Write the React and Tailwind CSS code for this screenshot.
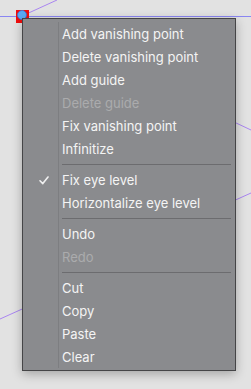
import React from "react";

const items = [
  { label: "Add vanishing point" },
  { label: "Delete vanishing point" },
  { label: "Add guide" },
  { label: "Delete guide", disabled: true },
  { label: "Fix vanishing point" },
  { label: "Infinitize" },
  { sep: true },
  { label: "Fix eye level", checked: true },
  { label: "Horizontalize eye level" },
  { sep: true },
  { label: "Undo" },
  { label: "Redo", disabled: true },
  { sep: true },
  { label: "Cut" },
  { label: "Copy" },
  { label: "Paste" },
  { label: "Clear" },
];

function Check() {
  return (
    <svg width="10" height="9" viewBox="0 0 10 9" className="block">
      <path d="M1 4.8 L3.8 7.6 L9 1" fill="none" stroke="#f0f0f0" strokeWidth="1.6" strokeLinecap="round" strokeLinejoin="round" />
    </svg>
  );
}

export default function App() {
  return (
    <div className="relative w-[251px] h-[389px] overflow-hidden bg-[#e2e2e2]" style={{ fontFamily: "Inter, 'Noto Sans', sans-serif" }}>
      <svg className="absolute inset-0" width="251" height="389" viewBox="0 0 251 389">
        <line x1="0" y1="16.5" x2="251" y2="16.5" stroke="#8a86f2" strokeWidth="1" />
        <line x1="22" y1="16" x2="57" y2="0" stroke="#a985f0" strokeWidth="1" />
        <line x1="200" y1="106" x2="251" y2="130" stroke="#a985f0" strokeWidth="1" />
        <line x1="0" y1="319" x2="60" y2="292" stroke="#a985f0" strokeWidth="1" />
        <line x1="220" y1="207" x2="251" y2="193" stroke="#a985f0" strokeWidth="1" />
        <rect x="16" y="10" width="13" height="13" fill="#f20d0d" />
        <path d="M22 10.5 C24.5 10.5 26.5 12.5 26.5 15 C26.5 17.5 24.5 19.5 22 19.5 C19.5 19.5 17.5 17.5 17.5 15 C17.5 13 19 11.5 20 11 Z" fill="#5aaaf5" stroke="#2f78d8" strokeWidth="0.8" />
      </svg>

      <div className="absolute left-[22px] top-[18px] w-[214px] h-[353px] bg-[#8a8b8e] border border-[#454547] shadow-[0_3px_10px_rgba(0,0,0,0.28)]">
        <div className="absolute left-[35px] top-[3px] bottom-[2px] w-px bg-[#7d7e81]" />
        <div className="relative pt-[4px]">
          {items.map((it, i) =>
            it.sep ? (
              <div key={i} className="h-[8px] pl-[39px] pr-[4px] pt-[3px]">
                <div className="h-px bg-[#6c6c6f]" />
              </div>
            ) : (
              <div key={i} className="flex items-center h-[23px]">
                <div className="w-[39px] flex justify-center pl-[3px]">
                  {it.checked ? <Check /> : null}
                </div>
                <span className={"text-[13px] leading-none " + (it.disabled ? "text-[#ababad]" : "text-[#f4f4f4]")}>
                  {it.label}
                </span>
              </div>
            )
          )}
        </div>
      </div>
    </div>
  );
}
